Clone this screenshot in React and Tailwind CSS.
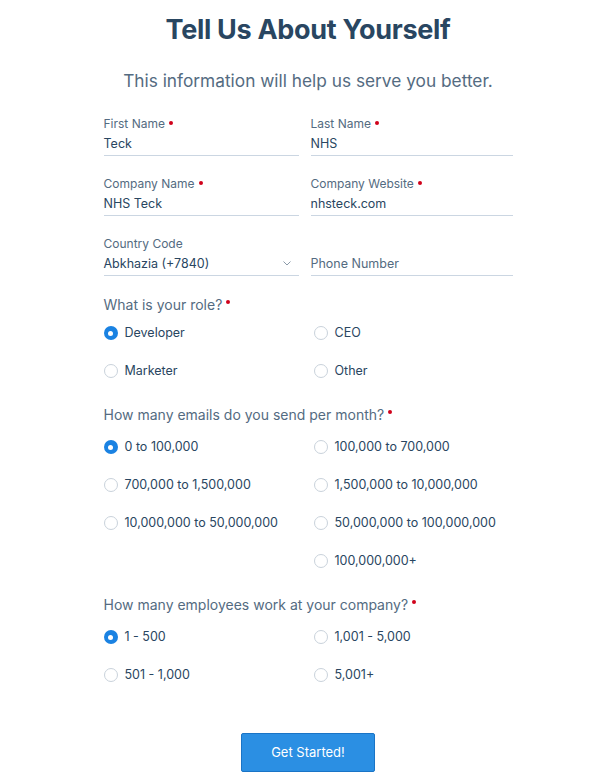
import React from 'react';

const Field = ({ label, value, placeholder, required, select }) => (
    <div className="flex flex-col">
        <div className="h-[17px] text-[12px] leading-[17px] text-[#546b81]">
            {label}
            {required && <span className="ml-[4px] relative top-[-3px] inline-block w-[4px] h-[4px] rounded-full bg-[#d0021b]" />}
        </div>
        <div className="flex items-center justify-between h-[24px] border-b border-[#cbd6e2] text-[12.5px] leading-[24px]">
            {value ? <span className="text-[#294661]">{value}</span> : <span className="text-[#546b81]">{placeholder}</span>}
            {select && (
                <svg width="8" height="5" viewBox="0 0 8 5" className="mr-[8px]">
                    <path d="M0.5 0.5 L4 4 L7.5 0.5" fill="none" stroke="#8b9aa9" strokeWidth="1" />
                </svg>
            )}
        </div>
    </div>
);

const Radio = ({ label, checked, hidden }) => {
    if (hidden) return <div className="h-[38px]" />;
    return (
        <div className="flex items-center h-[38px]">
            {checked ? (
                <span className="w-[14px] h-[14px] rounded-full bg-[#1a82e2] flex items-center justify-center">
                    <span className="w-[5px] h-[5px] rounded-full bg-white" />
                </span>
            ) : (
                <span className="w-[14px] h-[14px] rounded-full border border-[#c9d2db] bg-white" />
            )}
            <span className="ml-[7px] text-[12.5px] text-[#294661]">{label}</span>
        </div>
    );
};

// tight: gap under the heading is a bit smaller on the first question
const Question = ({ title, options, tight }) => (
    <div className="flex flex-col">
        <div className={`text-[14px] leading-[20px] text-[#546b81] ${tight ? 'mb-[-1px]' : 'mb-[3px]'}`}>
            {title}
            <span className="ml-[4px] relative top-[-6px] inline-block w-[4px] h-[4px] rounded-full bg-[#d0021b]" />
        </div>
        <div className="grid grid-cols-[210px_1fr]">
            {options.map((o, i) => (
                <Radio key={i} label={o.label} checked={o.checked} hidden={o.hidden} />
            ))}
        </div>
    </div>
);

export default function App() {
    return (
        <div className="min-h-screen bg-white font-['Inter',sans-serif] flex flex-col items-center pl-[6px]">
            <h1 className="mt-[12px] text-[27px] leading-[36px] font-bold tracking-[-0.3px] text-[#294661]">Tell Us About Yourself</h1>
            <p className="mt-[21px] text-[17.3px] leading-[24px] text-[#546b81]">This information will help us serve you better.</p>

            <div className="w-[409px] mt-[22px] flex flex-col">
                <div className="grid grid-cols-[195px_202px] gap-x-[12px] gap-y-[19px]">
                    <Field label="First Name" value="Teck" required />
                    <Field label="Last Name" value="NHS" required />
                    <Field label="Company Name" value="NHS Teck" required />
                    <Field label="Company Website" value="nhsteck.com" required />
                    <Field label="Country Code" value="Abkhazia (+7840)" select />
                    <Field label="" placeholder="Phone Number" />
                </div>

                <div className="mt-[19px]">
                    <Question
                        tight
                        title="What is your role?"
                        options={[
                            { label: 'Developer', checked: true },
                            { label: 'CEO' },
                            { label: 'Marketer' },
                            { label: 'Other' },
                        ]}
                    />
                </div>

                <div className="mt-[15px]">
                    <Question
                        title="How many emails do you send per month?"
                        options={[
                            { label: '0 to 100,000', checked: true },
                            { label: '100,000 to 700,000' },
                            { label: '700,000 to 1,500,000' },
                            { label: '1,500,000 to 10,000,000' },
                            { label: '10,000,000 to 50,000,000' },
                            { label: '50,000,000 to 100,000,000' },
                            { hidden: true },
                            { label: '100,000,000+' },
                        ]}
                    />
                </div>

                <div className="mt-[15px]">
                    <Question
                        title="How many employees work at your company?"
                        options={[
                            { label: '1 - 500', checked: true },
                            { label: '1,001 - 5,000' },
                            { label: '501 - 1,000' },
                            { label: '5,001+' },
                        ]}
                    />
                </div>

                <div className="flex justify-center mt-[39px]">
                    <button className="w-[134px] h-[39px] rounded-[2px] bg-[#2b8fe3] border border-[#1a74c6] text-white text-[13px]">
                        Get Started!
                    </button>
                </div>
            </div>
        </div>
    );
}
